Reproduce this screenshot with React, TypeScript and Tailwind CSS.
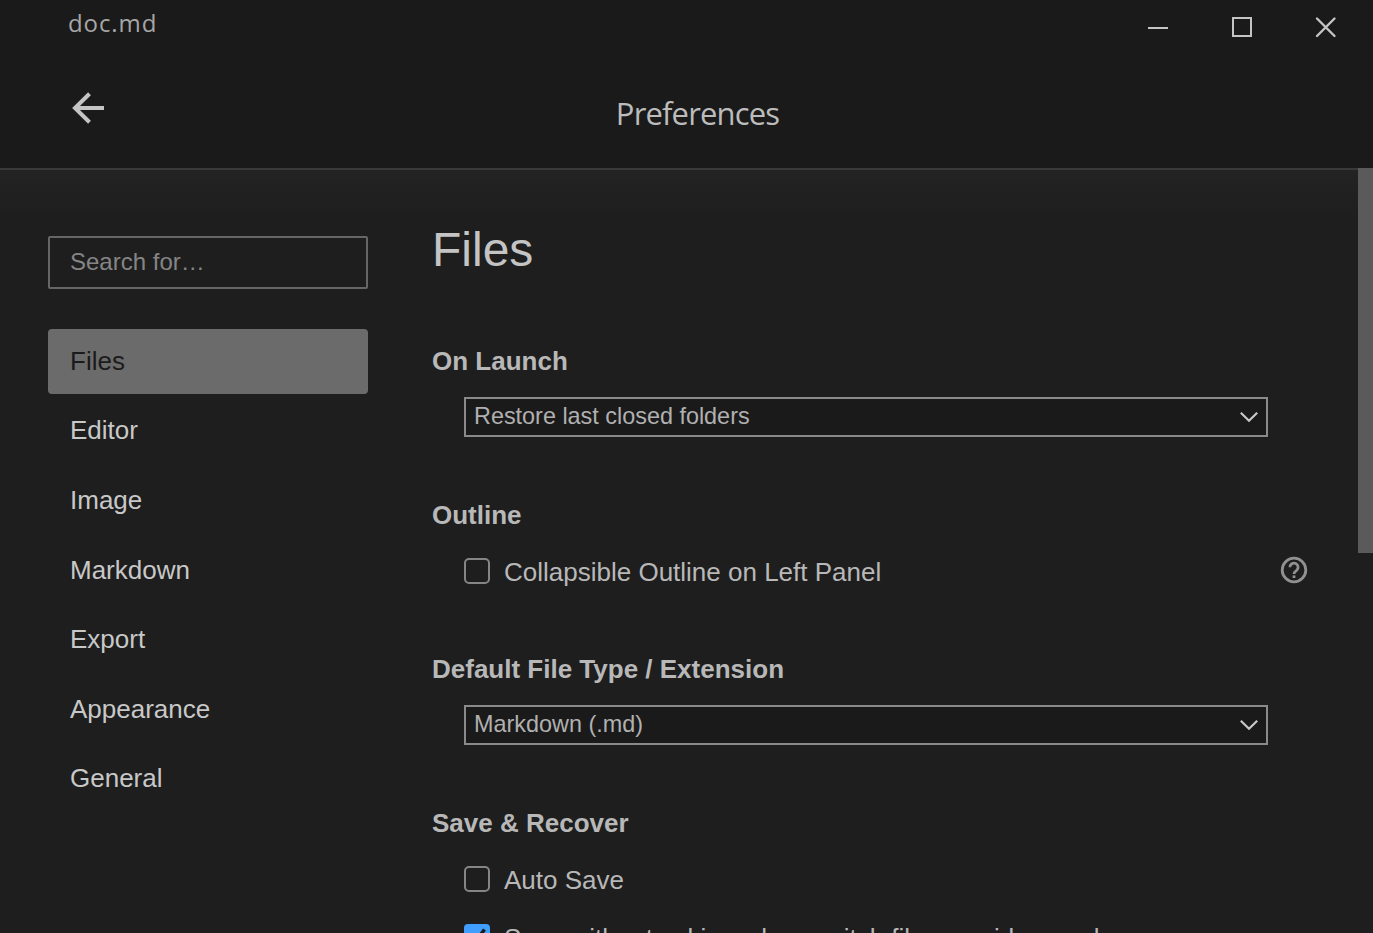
import type { ReactNode } from 'react';

const NAV_ITEMS = ['Files', 'Editor', 'Image', 'Markdown', 'Export', 'Appearance', 'General'];

function TitleBar() {
  return (
    <div className="flex h-[54px] items-start justify-between pl-[68px] pr-[36px]">
      <span className="pt-[7px] font-['Open_Sans',sans-serif] text-[24px] leading-[32px] tracking-[0.9px] text-[#a6a6a6]">
        doc.md
      </span>
      <div className="flex gap-[60px] pt-[15px] text-[#c4c4c4]">
        <svg width="24" height="24" viewBox="0 0 24 24" fill="none" stroke="currentColor" strokeWidth="2">
          <path d="M3 13h20" />
        </svg>
        <svg width="24" height="24" viewBox="0 0 24 24" fill="none" stroke="currentColor" strokeWidth="2">
          <path d="M4 3h18v18H4z" />
        </svg>
        <svg width="24" height="24" viewBox="0 0 24 24" fill="none" stroke="currentColor" strokeWidth="2.4" strokeLinecap="round">
          <path d="M4 3.500l17.500 17.500M21.500 3.500L4 21" />
        </svg>
      </div>
    </div>
  );
}

function Header() {
  return (
    <header className="h-[168px] shrink-0 bg-[#1a1a1a]">
      <TitleBar />
      <div className="grid grid-cols-[1fr_auto_1fr] items-start">
        <button aria-label="Back" className="ml-[72px] mt-[38px] w-8 text-[#c4c4c4]">
          <svg width="32" height="32" viewBox="0 0 32 32" fill="none" stroke="currentColor" strokeWidth="4">
            <path d="M17.500 1.800L3 16l14.500 14.200M3 16h29" />
          </svg>
        </button>
        <h1 className="mr-[-22px] mt-[38px] font-['Open_Sans',sans-serif] text-[31px] leading-[42px] tracking-[-0.85px] text-[#bcbcbc]">
          Preferences
        </h1>
        <span />
      </div>
    </header>
  );
}

function Sidebar() {
  return (
    <aside className="ml-12 mt-[66px] w-80 shrink-0">
      <div className="flex h-[53px] rounded-[2px] border-2 border-[#666666] px-5 text-[24px] leading-[47px] text-[#858585]">
        Search for…
      </div>
      <nav className="mt-[39.9px] flex flex-col gap-[4.55px] text-[26px] leading-[64px]">
        {NAV_ITEMS.map((item, index) => (
          <a
            key={item}
            className={
              index === 0
                ? 'block h-[65px] rounded-[4px] bg-[#6b6b6b] px-[22px] text-[#1b1b1b]'
                : 'block h-[65px] px-[22px] text-[#c8c8c8]'
            }
          >
            {item}
          </a>
        ))}
      </nav>
    </aside>
  );
}

function Section({ title, children }: { title: string; children: ReactNode }) {
  return (
    <section className="h-[154px]">
      <h3 className="text-[26px] font-bold leading-[36px] text-[#b8b8b8]">{title}</h3>
      {children}
    </section>
  );
}

function Select({ value }: { value: string }) {
  return (
    <div className="ml-8 mt-[18px] flex h-10 w-[804px] items-start justify-between border-2 border-[#8a8a8a] bg-[#1a1a1a] pl-2 pr-[7px] text-[23.4px] leading-[34px] text-[#b0b0b0]">
      <span>{value}</span>
      <svg className="mt-[11px] text-[#c8c8c8]" width="20" height="14" viewBox="0 0 20 14" fill="none" stroke="currentColor" strokeWidth="2.2">
        <path d="M1.800 2.700l8.200 8 8.200-8" />
      </svg>
    </div>
  );
}

function Option({ label, checked = false, help = false }: { label: string; checked?: boolean; help?: boolean }) {
  return (
    <div className="ml-8 flex h-[30px] items-start">
      {checked ? (
        <span className="mt-px flex size-[26px] items-center justify-center rounded-[4px] bg-[#409eff] text-[#1a1a1a]">
          <svg width="26" height="26" viewBox="0 0 26 26" fill="none" stroke="currentColor" strokeWidth="3.500">
            <path d="M4.500 13.500l5.500 6L20.500 5.500" />
          </svg>
        </span>
      ) : (
        <span className="mt-px size-[26px] rounded-[5px] border-2 border-[#858585]" />
      )}
      <span className="ml-[14px] whitespace-nowrap text-[26px] leading-[30px] text-[#b8b8b8]">{label}</span>
      {help && (
        <svg className="-mt-px ml-auto mr-[50px] text-[#919191]" width="28" height="28" viewBox="0 0 28 28" fill="none" stroke="currentColor" strokeWidth="2.800">
          <circle cx="14" cy="14" r="11.800" />
          <path d="M9.900 11.200a4.100 4.100 0 1 1 6.800 3.100c-1.600 1.300-2.700 1.900-2.700 3.700" />
          <path d="M14 19.400v2.600" />
        </svg>
      )}
    </div>
  );
}

export default function App() {
  return (
    <div className="flex h-[933px] w-full flex-col overflow-hidden bg-[#1e1e1e] font-['Liberation_Sans',Arial,sans-serif]">
      <Header />
      <div className="flex min-h-0 flex-1 overflow-hidden">
        <div className="flex min-w-0 flex-1 overflow-hidden border-t-2 border-[#3a3a3a] bg-linear-to-b from-[#232323] to-[#1e1e1e] to-[48px]">
          <Sidebar />
          <main className="ml-16 min-w-0 flex-1">
            <h2 className="mt-[50px] text-[48px] leading-[60px] text-[#c4c4c4]">Files</h2>
            <div className="mt-[63px]">
              <Section title="On Launch">
                <Select value="Restore last closed folders" />
              </Section>
              <Section title="Outline">
                <div className="mt-6">
                  <Option label="Collapsible Outline on Left Panel" help />
                </div>
              </Section>
              <Section title="Default File Type / Extension">
                <Select value="Markdown (.md)" />
              </Section>
              <Section title="Save & Recover">
                <div className="mt-6 flex flex-col gap-7">
                  <Option label="Auto Save" />
                  <Option label="Save without asking when switch files on side panel" checked />
                </div>
              </Section>
            </div>
          </main>
        </div>
        <div className="w-[15px] shrink-0">
          <div className="h-[385px] bg-[#5a5a5a]" />
        </div>
      </div>
    </div>
  );
}
